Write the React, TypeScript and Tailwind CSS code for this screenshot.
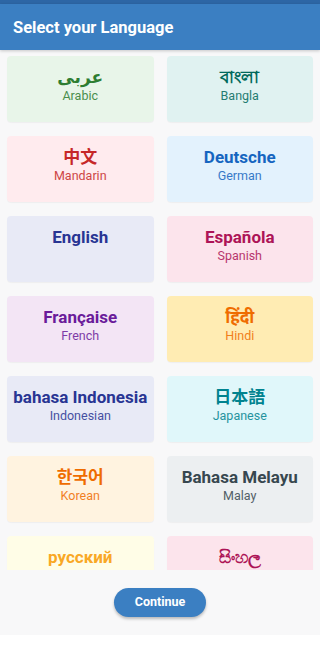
import React from 'react';

interface Language {
  native: string;
  english: string;
  bg: string;
  text: string;
}

const languages: Language[] = [
  { native: 'عربى', english: 'Arabic', bg: 'bg-[#e8f5e9]', text: 'text-[#2e7d32]' },
  { native: 'বাংলা', english: 'Bangla', bg: 'bg-[#e0f2f1]', text: 'text-[#00695c]' },
  { native: '中文', english: 'Mandarin', bg: 'bg-[#ffebee]', text: 'text-[#c62828]' },
  { native: 'Deutsche', english: 'German', bg: 'bg-[#e3f2fd]', text: 'text-[#1565c0]' },
  { native: 'English', english: '', bg: 'bg-[#e8eaf6]', text: 'text-[#283593]' },
  { native: 'Española', english: 'Spanish', bg: 'bg-[#fce4ec]', text: 'text-[#ad1457]' },
  { native: 'Française', english: 'French', bg: 'bg-[#f3e5f5]', text: 'text-[#6a1b9a]' },
  { native: 'हिंदी', english: 'Hindi', bg: 'bg-[#ffecb3]', text: 'text-[#ef6c00]' },
  { native: 'bahasa Indonesia', english: 'Indonesian', bg: 'bg-[#e8eaf6]', text: 'text-[#283593]' },
  { native: '日本語', english: 'Japanese', bg: 'bg-[#e0f7fa]', text: 'text-[#00838f]' },
  { native: '한국어', english: 'Korean', bg: 'bg-[#fff3e0]', text: 'text-[#ef6c00]' },
  { native: 'Bahasa Melayu', english: 'Malay', bg: 'bg-[#eceff1]', text: 'text-[#37474f]' },
  { native: 'русский', english: 'Russian', bg: 'bg-[#fffde7]', text: 'text-[#f9a825]' },
  { native: 'සිංහල', english: 'Sinhala', bg: 'bg-[#fce4ec]', text: 'text-[#ad1457]' },
];

const font = "font-['Roboto','Noto_Sans','DejaVu_Sans','Noto_Sans_CJK_SC',sans-serif]";

const LanguageCard: React.FC<{ lang: Language }> = ({ lang }) => (
  <div className={`${lang.bg} ${lang.text} h-[66px] rounded-[4px] shadow-[0_1px_1px_rgba(0,0,0,0.04)] flex flex-col items-center pt-[10px]`}>
    <span className="text-[17px] font-bold leading-[22px]">{lang.native}</span>
    {lang.english && <span className="text-[12.5px] leading-[16px] opacity-85">{lang.english}</span>}
  </div>
);

export default function App() {
  return (
    <div className={`w-[320px] h-[647px] flex flex-col bg-white ${font}`}>
      <div className="h-[4px] bg-[#2d66a5]" />
      <header className="h-[46px] bg-[#3b7fc2] flex items-center px-[13px] pt-[2px] shadow-[0_1px_3px_rgba(0,0,0,0.2)] z-10">
        <h1 className="text-white text-[16.5px] font-bold">Select your Language</h1>
      </header>
      <div className="h-[520px] overflow-hidden bg-[#f8f8f9]">
        <div className="grid grid-cols-2 gap-x-[13px] gap-y-[14px] px-[7px] pt-[6px]">
          {languages.map((lang) => (
            <LanguageCard key={lang.english + lang.native} lang={lang} />
          ))}
        </div>
      </div>
      <div className="h-[65px] bg-[#f8f8f9] flex justify-center pt-[18px]">
        <button className="w-[92px] h-[29px] rounded-full bg-[#3b7fc2] text-white text-[12.5px] font-bold shadow-[0_2px_3px_rgba(0,0,0,0.25)]">
          Continue
        </button>
      </div>
      <div className="flex-1 bg-white" />
    </div>
  );
}
